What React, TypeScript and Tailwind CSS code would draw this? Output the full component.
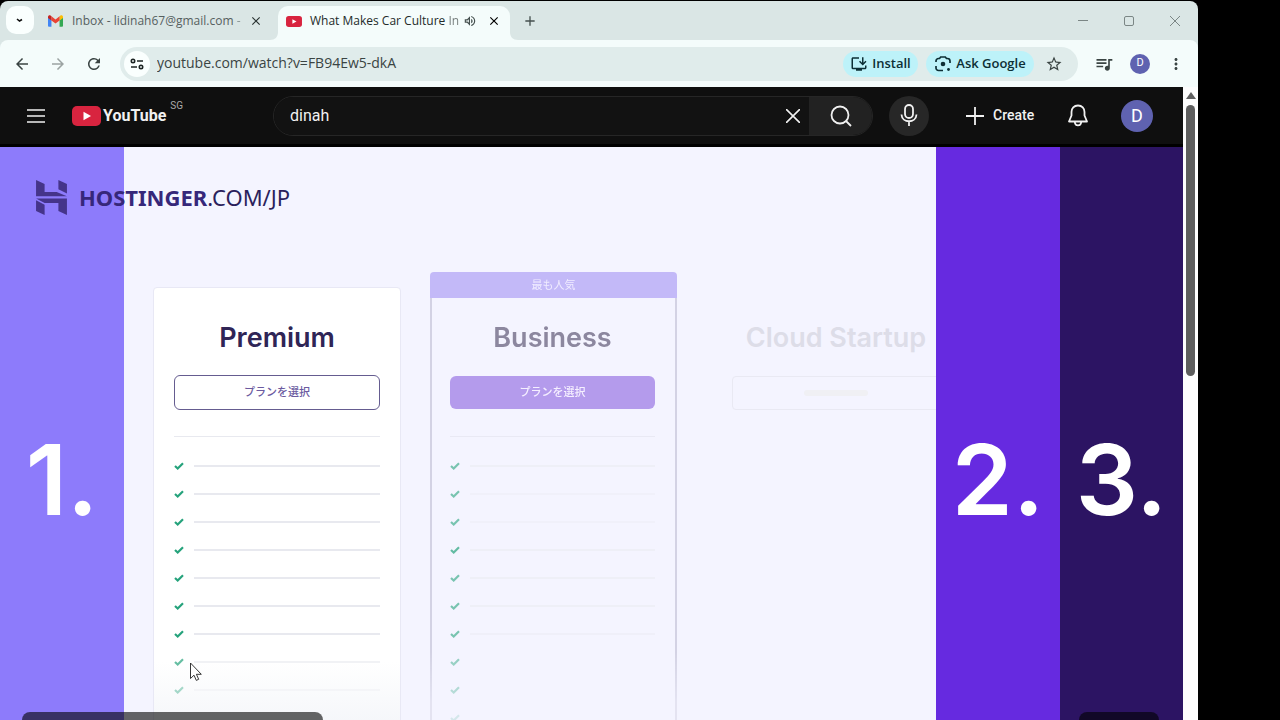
import { ReactNode } from "react";
import {
  MdArrowBack,
  MdArrowForward,
  MdClose,
  MdMoreVert,
  MdOutlineInstallDesktop,
  MdQueueMusic,
  MdRefresh,
  MdStarBorder,
  MdAdd,
  MdOutlineVolumeUp,
} from "react-icons/md";

const premiumRows = [
  { check: "opacity-100", line: "opacity-100" },
  { check: "opacity-100", line: "opacity-100" },
  { check: "opacity-100", line: "opacity-100" },
  { check: "opacity-100", line: "opacity-100" },
  { check: "opacity-100", line: "opacity-100" },
  { check: "opacity-100", line: "opacity-100" },
  { check: "opacity-100", line: "opacity-100" },
  { check: "opacity-70", line: "opacity-60" },
  { check: "opacity-40", line: "opacity-30" },
];

const businessRows = [
  { check: "opacity-60", line: "opacity-50" },
  { check: "opacity-60", line: "opacity-30" },
  { check: "opacity-60", line: "opacity-30" },
  { check: "opacity-70", line: "opacity-50" },
  { check: "opacity-60", line: "opacity-50" },
  { check: "opacity-60", line: "opacity-50" },
  { check: "opacity-60", line: "opacity-40" },
  { check: "opacity-50", line: "opacity-0" },
  { check: "opacity-50", line: "opacity-0" },
  { check: "opacity-30", line: "opacity-0" },
];

function YouTubeMark({ className }: { className?: string }) {
  return (
    <svg viewBox="0 0 29 20" className={className} aria-hidden="true">
      <rect width="29" height="20" rx="5" fill="#d8243f" />
      <path d="M11.5 5.8v8.4L19 10z" fill="#fff" />
    </svg>
  );
}

function GmailMark() {
  return (
    <svg viewBox="0 0 24 18" className="h-3 w-[15px] shrink-0" aria-hidden="true">
      <path d="M0 3v13.5A1.500 1.500 0 0 0 1.500 18H5.500V7z" fill="#4285f4" />
      <path d="M18.500 18h4a1.500 1.500 0 0 0 1.500-1.500V3l-5.500 4z" fill="#34a853" />
      <path d="M18.500 1.500V8L24 4V2.500C24 .1 21.200-.9 19.600.6z" fill="#fbbc04" />
      <path d="M5.500 8V1.500L12 6.400l6.500-4.900V8L12 13z" fill="#ea4335" />
      <path d="M0 2.500V4l5.500 4V1.500L4.400.6C2.800-.9 0 .1 0 2.500z" fill="#c5221f" />
    </svg>
  );
}

function HostingerMark() {
  return (
    <svg viewBox="0 0 30 34" className="h-[35px] w-[31px]" fill="#45348a" aria-hidden="true">
      <path d="M0 0l8.300 4v7.700H20l10 4H0z" />
      <path d="M21.700 0L30 4v9l-8.300-4z" />
      <path d="M0 19.700L8.300 24v10L0 30z" />
      <path d="M0 18h30v16l-8.300-4v-7.700H8.300z" />
    </svg>
  );
}

function CheckMark() {
  return (
    <svg viewBox="0 0 10 8" className="h-2 w-2.5" fill="none" stroke="#26a37c" strokeWidth="2.200" aria-hidden="true">
      <path d="M1 4l2.700 2.500L9 1.300" />
    </svg>
  );
}

interface IconButtonProps {
  label: string;
  className?: string;
  children: ReactNode;
}

function IconButton({ label, className, children }: IconButtonProps) {
  return (
    <button aria-label={label} className={`flex shrink-0 items-center justify-center ${className ?? ""}`}>
      {children}
    </button>
  );
}

function TabStrip() {
  return (
    <div className="flex h-[39px] items-end bg-[#dae6e5] text-[#45504f]">
      <div className="flex h-[34px] items-start pl-1.5">
        <IconButton label="Search tabs" className="h-7 w-7 rounded-[10px] bg-[#fafffe]">
          <svg viewBox="0 0 8 6" className="h-1.5 w-2" fill="none" stroke="#111" strokeWidth="1.600">
            <path d="M1 2l2.500 2L6 2.500" />
          </svg>
        </IconButton>
      </div>

      <div className="flex h-[34px] w-[244px] items-center pb-1 pl-3.5 pr-3.5">
        <GmailMark />
        <button className="ml-[9px] flex-1 whitespace-nowrap text-left text-[12px] leading-4 text-[#56605f]">
          Inbox - lidinah67@gmail.com <span className="opacity-60">-</span>
        </button>
        <IconButton label="Close tab" className="h-4 w-4 text-[#2b3534]">
          <MdClose className="h-3.5 w-3.5" />
        </IconButton>
      </div>

      <div className="relative flex h-[34px] w-[232px] items-center rounded-t-[10px] bg-[#f4fcfb] pb-1 pl-2 pr-2">
        {/* Flared feet of the active tab */}
        <svg viewBox="0 0 8 8" className="absolute -left-2 bottom-0 h-2 w-2" fill="#f4fcfb" aria-hidden="true">
          <path d="M8 0v8H0c5 0 8-3 8-8z" />
        </svg>
        <svg viewBox="0 0 8 8" className="absolute -right-2 bottom-0 h-2 w-2" fill="#f4fcfb" aria-hidden="true">
          <path d="M0 0v8h8C3 8 0 5 0 0z" />
        </svg>
        <YouTubeMark className="h-[11px] w-4 shrink-0" />
        <button className="ml-2 flex-1 whitespace-nowrap text-left text-[12px] leading-4 text-[#232b2a]">
          What Makes Car Culture <span className="opacity-60">In</span>
        </button>
        <IconButton label="Mute tab" className="h-4 w-4">
          <MdOutlineVolumeUp className="h-3.5 w-3.5" />
        </IconButton>
        <IconButton label="Close tab" className="ml-2 h-4 w-4 text-black">
          <MdClose className="h-3.5 w-3.5" />
        </IconButton>
      </div>

      <IconButton label="New tab" className="ml-2.5 h-[34px] w-5 pb-1">
        <MdAdd className="h-4 w-4" />
      </IconButton>

      <div className="ml-auto flex h-[39px] text-[#7b8685]">
        <IconButton label="Minimize" className="w-[46px]">
          <svg viewBox="0 0 10 10" className="h-2.5 w-2.5" stroke="currentColor">
            <path d="M0 4.500h10" />
          </svg>
        </IconButton>
        <IconButton label="Maximize" className="w-[46px]">
          <svg viewBox="0 0 10 10" className="h-2.5 w-2.5" fill="none" stroke="currentColor">
            <rect x=".5" y=".5" width="9" height="9" rx="1.500" />
          </svg>
        </IconButton>
        <IconButton label="Close window" className="w-[46px]">
          <svg viewBox="0 0 10 10" className="h-2.5 w-2.5" stroke="currentColor">
            <path d="M0 0l10 10M10 0L0 10" />
          </svg>
        </IconButton>
      </div>
    </div>
  );
}

function Toolbar() {
  return (
    <div className="bg-[#dae6e5]">
      <div className="flex h-[47px] items-center rounded-t-lg bg-[#f4fcfb] px-1 text-[#3a4443]">
        <IconButton label="Back" className="h-9 w-9">
          <MdArrowBack className="h-[18px] w-[18px]" />
        </IconButton>
        <IconButton label="Forward" className="h-9 w-9 text-[#9ba3a2]">
          <MdArrowForward className="h-[18px] w-[18px]" />
        </IconButton>
        <IconButton label="Reload" className="h-9 w-9">
          <MdRefresh className="h-[18px] w-[18px]" />
        </IconButton>

        <div className="ml-2 flex h-[34px] flex-1 items-center rounded-full bg-[#e0eceb] pl-1 pr-3.5">
          <IconButton label="Site information" className="h-[26px] w-[26px] rounded-full bg-[#fafffe] text-[#1c2423]">
            <svg viewBox="0 0 14 12" className="h-3 w-3.5" fill="none" stroke="currentColor" strokeWidth="1.600">
              <circle cx="3" cy="3" r="1.700" />
              <path d="M7 3h6M1 9h6" />
              <circle cx="11" cy="9" r="1.700" />
            </svg>
          </IconButton>
          <input
            aria-label="Address"
            defaultValue="youtube.com/watch?v=FB94Ew5-dkA"
            className="ml-[7px] min-w-0 flex-1 bg-transparent pb-0.5 text-[14px] text-[#3a4443] outline-none"
          />
          <button className="flex h-[26px] w-[75px] shrink-0 items-center justify-center gap-1 rounded-full bg-[#bdf2f9] text-[13px] font-semibold text-[#0d2f35]">
            <MdOutlineInstallDesktop className="h-[18px] w-[18px]" />
            Install
          </button>
          <button className="ml-2 flex h-[26px] w-[108px] shrink-0 items-center justify-center gap-1 rounded-full bg-[#bdf2f9] text-[13px] font-semibold text-[#0d2f35]">
            <svg viewBox="0 0 18 18" className="h-[18px] w-[18px] shrink-0" fill="none" stroke="currentColor" strokeWidth="1.700">
              <path d="M2 7V6a2.500 2.500 0 0 1 2.500-2.500h1L6.700 2h4.600l1.200 1.500h1A2.500 2.500 0 0 1 16 6v2M2 11v2a2.500 2.500 0 0 0 2.500 2.500H9" />
              <circle cx="9" cy="9" r="2.300" fill="currentColor" stroke="none" />
              <circle cx="14.500" cy="14.500" r="1.400" fill="currentColor" stroke="none" />
            </svg>
            Ask Google
          </button>
          <IconButton label="Bookmark" className="ml-2.5 h-5 w-5">
            <MdStarBorder className="h-[18px] w-[18px]" />
          </IconButton>
        </div>

        <IconButton label="Media controls" className="ml-2 h-9 w-9">
          <MdQueueMusic className="h-5 w-5" />
        </IconButton>
        <IconButton label="Profile" className="h-9 w-9">
          <span className="flex h-5 w-5 items-center justify-center rounded-full bg-[#5f62b0] font-[Roboto,sans-serif] text-[11px] text-white">
            D
          </span>
        </IconButton>
        <IconButton label="Menu" className="h-9 w-9">
          <MdMoreVert className="h-[18px] w-[18px]" />
        </IconButton>
      </div>
    </div>
  );
}

function YouTubeHeader() {
  return (
    <header className="flex h-[60px] items-center border-b-[3px] border-black bg-[#0f0f0f] font-[Roboto,sans-serif] text-[#f1f1f1]">
      <div className="flex w-[273px] shrink-0 items-center pl-[26px]">
        <IconButton label="Guide" className="h-6 w-5">
          <svg viewBox="0 0 18 16" className="h-4 w-[18px]" stroke="currentColor" strokeWidth="1.600">
            <path d="M0 2h18M0 8h18M0 14h18" />
          </svg>
        </IconButton>
        <a href="#home" className="ml-[26px] flex items-center">
          <YouTubeMark className="h-5 w-[29px]" />
          <span className="ml-0.5 text-[16px] font-bold leading-5">YouTube</span>
          <span className="mb-5 ml-1 text-[10px] leading-3 text-[#aaa]">SG</span>
        </a>
      </div>

      <div className="flex flex-1 items-center">
        <form className="flex h-10 flex-1 overflow-hidden rounded-full border border-[#262626]">
          <input
            aria-label="Search"
            defaultValue="dinah"
            className="min-w-0 flex-1 bg-[#121212] pl-4 text-[16px] outline-none"
          />
          <button type="button" aria-label="Clear" className="flex w-8 items-center justify-center bg-[#121212]">
            <svg viewBox="0 0 14 14" className="h-3.5 w-3.5" stroke="currentColor" strokeWidth="1.600">
              <path d="M0 0l14 14M14 0L0 14" />
            </svg>
          </button>
          <button type="button" aria-label="Search" className="flex w-[63px] items-center justify-center bg-[#222]">
            <svg viewBox="0 0 22 22" className="h-[22px] w-[22px]" fill="none" stroke="currentColor" strokeWidth="1.800">
              <circle cx="10" cy="10" r="8.500" />
              <path d="M16 16l5 5" />
            </svg>
          </button>
        </form>
        <IconButton label="Search with your voice" className="ml-4 h-10 w-10 rounded-full bg-[#272727]">
          <svg viewBox="0 0 18 23" className="h-[23px] w-[18px]" fill="none" stroke="currentColor" strokeWidth="1.800">
            <rect x="5" y="1" width="8" height="13" rx="4" />
            <path d="M1.500 10.500c.5 9 14.500 9 15 0M9 17.500V22" />
          </svg>
        </IconButton>
      </div>

      <div className="flex w-[254px] shrink-0 items-center justify-between pl-9 pr-[30px]">
        <button className="flex items-center gap-2 text-[14px] font-medium">
          <svg viewBox="0 0 20 20" className="h-5 w-5" stroke="currentColor" strokeWidth="1.800">
            <path d="M10 1v18M1 10h18" />
          </svg>
          Create
        </button>
        <IconButton label="Notifications" className="h-6 w-6">
          <svg viewBox="0 0 20 23" className="h-[23px] w-5" fill="none" stroke="currentColor" strokeWidth="1.800">
            <path d="M10 1.500c-4 0-6.500 2.800-6.500 6.500v3.500L1 17.500h18l-2.500-6V8c0-3.700-2.500-6.500-6.500-6.500z" strokeLinejoin="round" />
            <path d="M6.800 18c.3 4.500 6.100 4.500 6.400 0" />
          </svg>
        </IconButton>
        <IconButton label="Account" className="h-8 w-8 rounded-full bg-[#5f62b0] text-[18px] text-white">
          D
        </IconButton>
      </div>
    </header>
  );
}

interface FeatureListProps {
  rows: { check: string; line: string }[];
}

function FeatureList({ rows }: FeatureListProps) {
  return (
    <ul className="mt-[15px]">
      {rows.map((row, i) => (
        <li key={i} className="flex h-7 items-center gap-2.5">
          <span className={row.check}>
            <CheckMark />
          </span>
          <span className={`h-0.5 flex-1 bg-[#e8e9ef] ${row.line}`} />
        </li>
      ))}
    </ul>
  );
}

function NumberColumn({ label, className }: { label: string; className: string }) {
  return (
    <div
      className={`shrink-0 pt-[283px] text-center font-[Inter,sans-serif] text-[98px] font-semibold leading-[100px] text-white ${className}`}
    >
      {label}
    </div>
  );
}

function VideoFrame() {
  return (
    <main className="relative flex min-h-0 flex-1 overflow-hidden">
      <NumberColumn label="1." className="w-[124px] bg-[#8d7bfb]" />

      <section className="flex min-w-0 flex-1 items-start gap-[29px] overflow-hidden bg-[#f4f4ff] pl-[29px] pt-[125px] font-[Inter,'Noto_Sans_CJK_JP',sans-serif]">
        <article className="mt-[15px] h-[500px] w-[248px] shrink-0 rounded border border-[#e8e8f5] bg-linear-to-b from-white from-75% to-[#f3f5f9] to-90% px-5 pt-[34px]">
          <h2 className="text-center text-[27px] font-semibold leading-8 text-[#2f2556]">Premium</h2>
          <button className="mt-[21px] h-[35px] w-full rounded-md border border-[#655c90] text-[11px] font-medium text-[#6b5aa0]">
            プランを選択
          </button>
          <div className="mt-[26px] h-px bg-[#e8e9ef]" />
          <FeatureList rows={premiumRows} />
        </article>

        <article className="w-[247px] shrink-0 [mask-image:linear-gradient(to_bottom,black_380px,rgb(0_0_0/0.5)_430px)]">
          <p className="h-[26px] rounded-t bg-[#c3b9f8] text-center text-[11px] leading-[26px] text-[#f0ecff]">
            最も人気
          </p>
          <div className="h-[480px] border-x-2 border-[#d3d2e4] pl-[18px] pr-5 pt-6">
            <h2 className="text-center text-[27px] font-semibold leading-8 text-[#8c879f]">Business</h2>
            <button className="mt-[22px] h-[33px] w-full rounded-md bg-[#b49bec] text-[11px] font-medium text-[#f5efff]">
              プランを選択
            </button>
            <div className="mt-[27px] h-px bg-[#e9e9f4]" />
            <FeatureList rows={businessRows} />
          </div>
        </article>

        <article className="w-[260px] shrink-0 pt-[50px]">
          <h2 className="text-center text-[27px] font-semibold leading-8 text-[#dddde8]">Cloud Startup</h2>
          <div className="px-[26px] pt-[22px]">
            <button
              aria-label="Select Cloud Startup"
              className="flex h-[34px] w-full items-center justify-center rounded border border-[#e9e9f3]"
            >
              <span className="h-1.5 w-16 rounded-full bg-[#f0f0f4]" />
            </button>
          </div>
        </article>
      </section>

      <NumberColumn label="2." className="w-[124px] bg-[#662ae0]" />
      <NumberColumn label="3." className="w-[123px] bg-[#2c1463]" />

      {/* Sponsor logo */}
      <div className="absolute left-9 top-[33px] flex items-center font-['Noto_Sans',sans-serif] text-[22px] leading-8 text-[#2b1f5c]">
        <HostingerMark />
        <p className="ml-3 pb-0.5">
          <span className="font-bold text-[#36277a]">HOSTINGER</span>.COM/JP
        </p>
      </div>

      {/* Player controls, just coming into view */}
      <div className="absolute bottom-0 left-[22px] h-2 w-[301px] rounded-t-lg bg-black/60" />
      <div className="absolute bottom-0 right-6 h-2 w-20 rounded-t-lg bg-black/60" />

      {/* Mouse pointer */}
      <svg
        viewBox="0 0 12 19"
        className="absolute left-[190px] top-[515px] h-[19px] w-3"
        fill="#fff"
        stroke="#222"
        strokeWidth=".9"
        aria-hidden="true"
      >
        <path d="M.5 1v15.500l3.500-3.300 2.300 5.200 2.400-1.100-2.300-5h4.900z" />
      </svg>
    </main>
  );
}

function Scrollbar() {
  return (
    <div className="flex w-[15px] shrink-0 flex-col items-center bg-[#fdfdfd] pt-[5px]" aria-hidden="true">
      <svg viewBox="0 0 10 7" className="h-[7px] w-2.5" fill="#606060">
        <path d="M5 0l5 7H0z" />
      </svg>
      <div className="mt-1.5 h-[271px] w-[9px] rounded-full bg-[#5d5d5d]" />
    </div>
  );
}

export default function App() {
  return (
    <div className="h-screen overflow-hidden bg-black pr-[82px] pt-px font-['Open_Sans','Noto_Sans_CJK_JP',sans-serif]">
      <div className="flex h-full flex-col overflow-hidden rounded-t-lg">
        <TabStrip />
        <Toolbar />
        <div className="flex min-h-0 flex-1">
          <div className="flex min-w-0 flex-1 flex-col">
            <YouTubeHeader />
            <VideoFrame />
          </div>
          <Scrollbar />
        </div>
      </div>
    </div>
  );
}
